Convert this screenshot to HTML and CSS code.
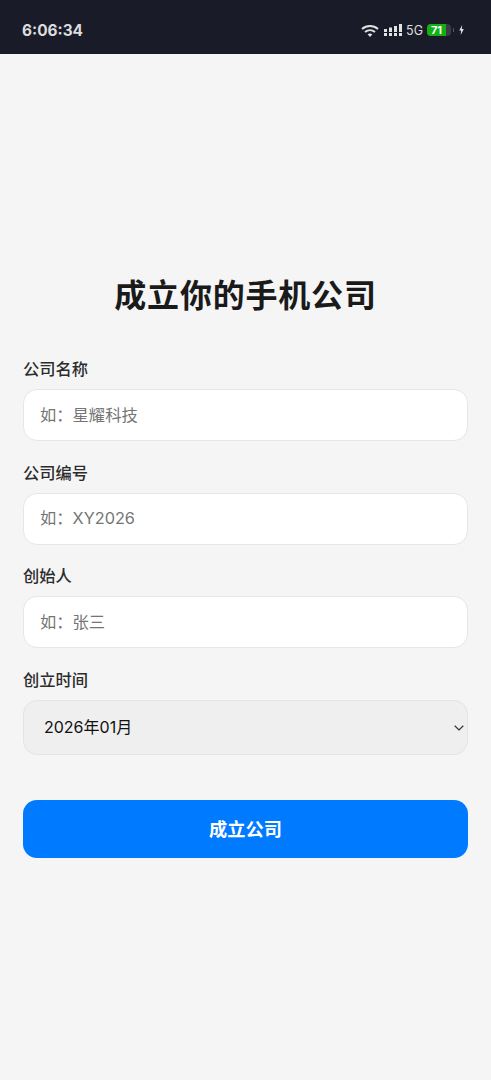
FILE: index.html
```html
<!DOCTYPE html>
<html lang="zh-CN">
<head>
<meta charset="utf-8">
<title>成立你的手机公司</title>
<link rel="stylesheet" href="styles.css">
</head>
<body>
<div class="statusbar">
  <span class="clock">6:06:34</span>
  <div class="status-icons">
    <svg class="wifi" width="18" height="13" viewBox="0 0 18 13"><path d="M1 5C5.6 .9 12.4 .9 17 5" fill="none" stroke="#e2e2e4" stroke-width="2"/><path d="M4 8C6.9 5.5 11.1 5.5 14 8" fill="none" stroke="#e2e2e4" stroke-width="2"/><path d="M6.6 10.3C8 9.3 10 9.3 11.4 10.3L9 13Z" fill="#e2e2e4"/></svg>
    <svg class="signal" width="18" height="12" viewBox="0 0 18 12"><g fill="#e2e2e4"><rect x="0" y="5" width="3" height="3"/><rect x="0" y="9" width="3" height="3"/><rect x="5" y="3.5" width="3" height="4.5"/><rect x="5" y="9" width="3" height="3"/><rect x="10" y="2" width="3" height="6"/><rect x="10" y="9" width="3" height="3"/><rect x="15" y="0" width="3" height="8"/><rect x="15" y="9" width="3" height="3"/></g></svg>
    <span class="net">5G</span>
    <span class="battery"><span class="battery-fill">71</span></span>
    <span class="battery-cap"></span>
    <svg class="bolt" width="5" height="10" viewBox="0 0 5 10"><path d="M3.2 0 .2 5.6h1.9L1.7 10l3.1-6H2.8Z" fill="#e2e2e4"/></svg>
  </div>
</div>
<main class="page">
  <h1 class="title">成立你的手机公司</h1>
  <form class="form">
    <label class="field"><span class="label">公司名称</span><input class="input" type="text" placeholder="如：星耀科技"></label>
    <label class="field"><span class="label">公司编号</span><input class="input" type="text" placeholder="如：XY2026"></label>
    <label class="field"><span class="label">创始人</span><input class="input" type="text" placeholder="如：张三"></label>
    <label class="field"><span class="label">创立时间</span>
      <span class="select-wrap">
        <select class="select"><option>2026年01月</option></select>
        <svg class="chevron" width="10" height="6" viewBox="0 0 10 6"><path d="M.7.8 5 5 9.3.8" fill="none" stroke="#333" stroke-width="1.2"/></svg>
      </span>
    </label>
    <button class="submit" type="button">成立公司</button>
  </form>
</main>
</body>
</html>
```
FILE: styles.css
```css
* { box-sizing: border-box; }
html, body { margin: 0; height: 100%; }
body {
  background: #f5f5f5;
  font-family: Inter, "Noto Sans CJK SC", sans-serif;
  color: #1a1a1a;
  height: 1080px;
  overflow: hidden;
}
.statusbar {
  height: 54px;
  background: #191c28;
  display: flex;
  align-items: center;
  justify-content: space-between;
  padding: 6px 27px 0 22px;
  color: #dcdcde;
}
.clock { font-size: 15.4px; font-weight: 700; }
.status-icons { display: flex; align-items: center; gap: 4px; }
.signal { margin-left: 1px; }
.net { font-size: 12.5px; font-weight: 400; }
.battery {
  width: 24px; height: 12px; border-radius: 4px; background: #3a3d48;
  display: flex; overflow: hidden;
}
.battery-fill {
  width: 19px; background: #12b012; color: #fff;
  font-size: 11px; font-weight: 700; line-height: 12px; text-align: center;
}
.battery-cap { width: 1px; height: 4px; background: #55575f; margin-left: -2px; }
.bolt { margin-left: 1px; }
.page { padding: 223px 23px 0; }
.title {
  margin: 0 0 42px;
  font-size: 32px;
  line-height: 38px;
  font-weight: 700;
  letter-spacing: 0.8px;
  text-align: center;
}
.form { display: flex; flex-direction: column; }
.field { display: flex; flex-direction: column; margin-bottom: 19.5px; }
.label { font-size: 16.25px; line-height: 24px; font-weight: 500; margin-bottom: 8px; color: #2c2c2c; }
.input {
  height: 52px;
  border: 1px solid #e6e6e6;
  border-radius: 14px;
  background: #fff;
  padding: 0 16px 1px;
  font: 400 16.3px Inter, "Noto Sans CJK SC", sans-serif;
  color: #1a1a1a;
  outline: none;
}
.input::placeholder { color: #757575; opacity: 1; }
.select-wrap { position: relative; display: block; }
.select {
  width: 100%;
  height: 55px;
  border: 1px solid #e4e4e4;
  border-radius: 14px;
  background: #efefef;
  padding: 0 20px;
  font: 400 16px Inter, "Noto Sans CJK SC", sans-serif;
  color: #111;
  appearance: none;
  outline: none;
}
.chevron { position: absolute; right: 4px; top: 25px; }
.submit {
  margin-top: 26px;
  height: 58px;
  border: 0;
  border-radius: 14px;
  background: #007aff;
  color: #fff;
  padding: 0 0 2px;
  font: 700 18.2px Inter, "Noto Sans CJK SC", sans-serif;
}
```
